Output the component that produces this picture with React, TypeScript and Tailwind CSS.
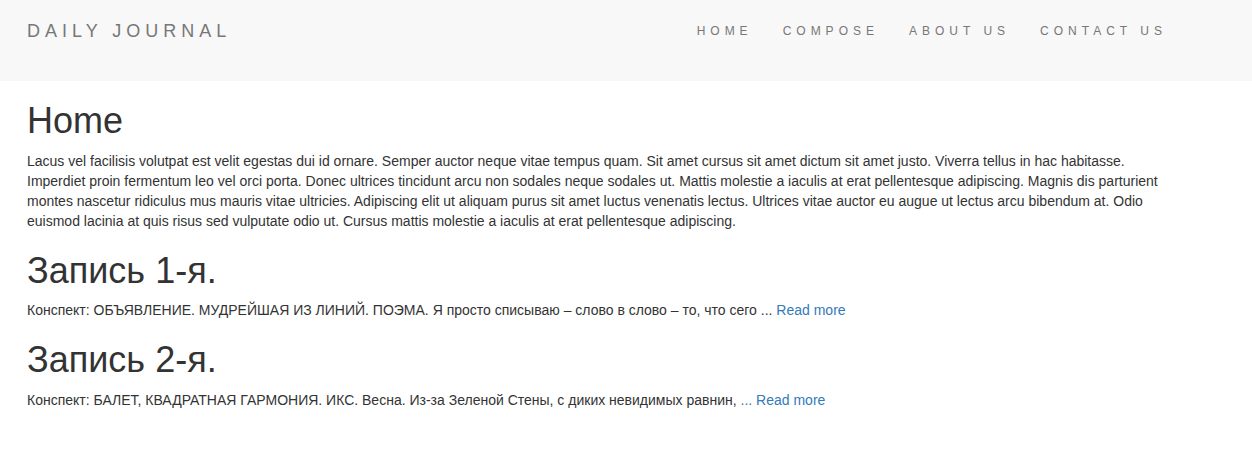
export default function App() {
  const font = { fontFamily: '"Liberation Sans", Arial, Helvetica, sans-serif' };
  return (
    <div className="min-h-[462px] bg-white text-[14px] leading-[20px] text-[#333]" style={font}>
      <nav className="h-[81px] bg-[#f8f8f8]">
        <div className="ml-[12px] flex w-[1170px] justify-between px-[15px] pt-[21px]">
          <a className="text-[18px] leading-[20px] tracking-[5px] text-[#777]">DAILY JOURNAL</a>
          <ul className="-mr-[15px] flex">
            {['HOME', 'COMPOSE', 'ABOUT US', 'CONTACT US'].map((t) => (
              <li key={t}>
                <a className="block px-[15px] text-[12px] leading-[20px] tracking-[5px] text-[#777]">{t}</a>
              </li>
            ))}
          </ul>
        </div>
      </nav>
      <main className="ml-[12px] w-[1170px] px-[15px]">
        <h1 className="mt-[20px] mb-[10px] text-[36px] leading-[1.1] font-normal">Home</h1>
        <p className="mb-[10px]">
          Lacus vel facilisis volutpat est velit egestas dui id ornare. Semper auctor neque vitae tempus quam. Sit amet cursus sit amet dictum sit amet justo. Viverra tellus in hac habitasse. Imperdiet proin fermentum leo vel orci porta. Donec ultrices tincidunt arcu non sodales neque sodales ut. Mattis molestie a iaculis at erat pellentesque adipiscing. Magnis dis parturient montes nascetur ridiculus mus mauris vitae ultricies. Adipiscing elit ut aliquam purus sit amet luctus venenatis lectus. Ultrices vitae auctor eu augue ut lectus arcu bibendum at. Odio euismod lacinia at quis risus sed vulputate odio ut. Cursus mattis molestie a iaculis at erat pellentesque adipiscing.
        </p>
        <h1 className="mt-[20px] mb-[10px] text-[36px] leading-[1.1] font-normal">Запись 1-я.</h1>
        <p className="mb-[10px]">
          Конспект: ОБЪЯВЛЕНИЕ. МУДРЕЙШАЯ ИЗ ЛИНИЙ. ПОЭМА. Я просто списываю – слово в слово – то, что сего ...{' '}
          <a className="text-[#337ab7]">Read more</a>
        </p>
        <h1 className="mt-[20px] mb-[10px] text-[36px] leading-[1.1] font-normal">Запись 2-я.</h1>
        <p className="mb-[10px]">
          Конспект: БАЛЕТ, КВАДРАТНАЯ ГАРМОНИЯ. ИКС. Весна. Из-за Зеленой Стены, с диких невидимых равнин,{' '}
          <a className="text-[#337ab7]">... Read more</a>
        </p>
      </main>
    </div>
  );
}
